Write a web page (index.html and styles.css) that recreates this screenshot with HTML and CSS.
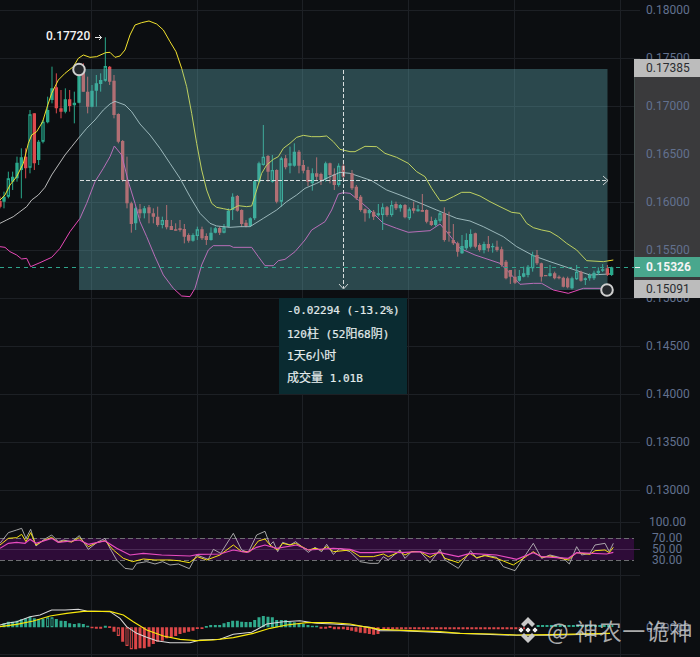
FILE: index.html
```html
<!DOCTYPE html>
<html lang="zh">
<head>
<meta charset="utf-8">
<title>Chart</title>
<link rel="stylesheet" href="styles.css">
</head>
<body>
<main class="stage">
<svg class="plot" width="700" height="657" viewBox="0 0 700 657" aria-hidden="true">
  <path class="grid" d="M0 10.5H640M0 58.5H640M0 106.5H640M0 154.5H640M0 202.5H640M0 250.5H640M0 298.5H640M0 346.5H640M0 394.5H640M0 442.5H640M0 490.5H640M0 522.5H640M0 575.5H640M0 654.5H640M91.5 0V657M197.5 0V657M302.5 0V657M408.5 0V657M514.5 0V657M620.5 0V657"/>
  <rect class="rsi-band" x="0" y="538" width="634" height="22"/>
  <path class="grid-faint" d="M0 549.5H640"/>
  <path class="rsi-dash" d="M0 538.5H634M0 560.5H634"/>

  <g transform="scale(.33333)">
    <path class="wick-g" d="M12 575V625M25 515V595M38 515V570M51 470V545M64 445V595M90 330V520M116 420V495M129 360V430M143 290V370M156 200V310M196 265V340M223 275V370M237 190V310M276 255V322M289 225V320M302 220V275M316 112V245M407 620V690M433 618V655M487 650V685M579 700V725M592 680V720M633 682V722M646 680V700M672 672V700M685 625V682M698 580V660M751 652V680M764 540V660M777 485V550M790 375V497M817 465V548M844 470V620M870 440V520M883 430V500M937 505V572M977 485V545M1016 490V560"/>
    <path class="body-g" d="M12 590V605M25 535V590M38 530V545M51 488V535M64 472V510M90 343V503M116 425V480M129 365V425M143 330V367M156 265V300M196 298V335M223 308V316M237 205V308M276 272V320M289 250V272M302 240V252M316 198V242M407 625V670M433 625V640M487 660V675M579 705V722M592 688V708M633 698V720M646 685V698M672 682V698M685 632V680M698 590V630M751 655V678M764 543V655M777 490V545M790 470V495M817 510V545M844 475V605M870 490V497M883 455V497M937 520V550M977 490V538M1016 497V555"/>
    <path class="wick-r" d="M0 590V625M77 445V535M103 340V510M169 220V340M183 270V355M209 270V335M250 190V275M263 230V340M329 198V255M342 225V355M355 340V430M368 420V545M381 470V625M394 605V698M420 612V655M447 615V670M460 625V670M473 620V680M500 615V688M514 660V690M527 670V692M540 660V695M553 672V730M566 700V728M606 680V720M619 700V735M659 680V705M712 585V635M725 628V680M738 660V682M804 465V545M830 508V610M857 465V508M897 450V520M910 480V520M924 500V558M950 472V540M963 518V555M990 488V550M1003 505V570M1030 480V540"/>
    <path class="body-r" d="M0 603V620M77 470V505M103 340V490M169 262V325M183 325V335M209 298V318M250 215V275M263 275V320M329 200V245M342 242V345M355 342V425M368 423V540M381 540V610M394 610V672M420 628V640M447 622V640M460 640V650M473 650V675M500 660V682M514 678V690M527 688V692M540 685V690M553 687V710M566 705V722M606 688V715M619 708V720M659 684V698M712 588V632M725 630V672M738 668V678M804 468V515M830 510V605M857 475V502M897 455V497M910 495V512M924 510V545M950 520V530M963 522V540M990 490V525M1003 523V555M1030 497V530"/>
    <path class="hollow" d="M90 347V499M129 370V420M316 203V237M487 664V671M672 686V694M790 474V491M817 514V541M844 480V600M1016 502V550M593 692V704M25 540V585"/>

    <polyline class="ln-y" points="0,600 15,585 30,555 50,530 70,490 85,430 95,405 110,395 128,365 140,325 155,280 175,240 195,220 220,200 235,175 250,165 270,172 290,170 317,158 330,157 345,172 360,168 375,150 390,105 405,75 425,68 447,63 470,72 490,90 510,125 528,155 545,205 560,260 575,340 590,430 605,510 620,570 635,610 650,622 670,626 690,630 700,625 715,617 740,620 755,618 770,570 785,520 800,495 820,478 835,470 850,445 870,430 890,412 910,406 935,410 960,410 980,408 1000,425 1020,448 1050,455 1065,455 1095,439 1130,440 1155,460 1190,472 1225,490 1250,515 1275,530 1295,565 1320,602 1335,602 1360,590 1385,577 1410,577 1440,588 1470,605 1500,620 1535,637 1560,640 1580,670 1600,683 1625,690 1650,695 1675,710 1700,730 1730,750 1760,782 1810,785 1840,780"/>
    <polyline class="ln-w" points="0,670 20,660 40,650 60,635 80,620 95,600 115,585 135,562 155,525 175,495 195,465 215,440 235,415 260,385 285,360 310,330 330,312 345,304 375,315 395,335 420,372 450,405 480,445 510,490 540,535 570,590 600,640 630,670 650,678 690,682 720,680 750,680 790,655 830,630 860,605 890,585 915,565 950,550 990,530 1020,517 1050,520 1080,530 1115,542 1160,570 1200,585 1250,605 1310,630 1370,655 1410,663 1450,680 1510,710 1550,740 1600,767 1650,785 1710,805 1770,825 1830,822"/>
    <polyline class="ln-m" points="0,740 15,742 30,755 50,765 65,777 80,775 92,800 120,788 155,772 180,745 210,695 240,655 260,610 285,545 310,505 330,470 343,438 365,465 385,545 405,610 420,665 440,710 465,770 490,825 520,865 545,888 570,890 585,865 605,795 625,750 640,737 690,737 700,742 755,742 775,770 795,797 820,797 835,782 855,778 885,755 915,720 935,690 975,665 995,630 1015,582 1030,578 1050,580 1075,600 1110,630 1150,670 1190,685 1225,697 1290,692 1320,672 1340,695 1380,745 1425,765 1470,780 1500,790 1530,820 1560,853 1600,850 1625,850 1660,870 1705,880 1750,865 1820,865"/>
  </g>
  <g transform="translate(350 0) scale(.33333)">
    <path class="wick-r" d="M6 510V570M19 555V600M32 585V635M45 625V665M71 630V660M111 618V650M138 605V630M165 612V655M191 605V640M217 582V635M230 628V670M244 650V678M283 622V725M297 635V725M310 672V735M323 725V770M376 698V745M389 730V755M415 708V755M441 722V755M455 740V800M468 780V838M481 810V852M495 808V852M561 750V795M574 788V845M614 815V838M627 826V838M640 830V862M653 830V865M693 812V845M772 795V828"/>
    <path class="body-r" d="M6 520V565M19 560V595M32 590V630M45 628V640M71 635V650M111 622V645M138 612V625M165 615V652M191 625V632M217 630V635M230 630V665M244 663V675M283 640V720M297 695V700M310 720V730M323 730V755M376 700V740M389 735V750M415 732V745M441 740V750M455 748V795M468 785V835M481 810V830M495 830V848M561 765V790M574 790V830M587 825V829M614 820V835M627 830V835M640 833V860M653 835V862M693 815V842M772 805V825"/>
    <path class="wick-g" d="M58 628V655M85 612V650M98 610V690M125 602V650M151 612V635M178 622V660M204 615V635M257 655V680M270 635V668M336 705V762M349 700V750M362 688V745M402 725V760M428 730V758M508 810V845M521 800V832M534 795V832M548 755V815M600 795V830M666 830V868M680 795V840M706 832V855M719 820V842M732 812V840M745 802V825M758 792V816M785 800V828"/>
    <path class="body-g" d="M58 630V640M85 640V646M98 622V645M125 615V645M151 615V625M178 628V655M204 628V634M257 660V675M270 640V662M336 738V760M349 720V745M362 702V740M402 732V750M428 738V742M508 828V842M521 820V830M534 800V825M548 765V805M600 820V828M666 835V865M680 815V838M706 835V840M719 825V835M732 818V835M745 812V820M758 808V812M785 802V825"/>
    <path class="hollow" d="M98 626V641M125 619V641M178 632V651M548 769V801M680 819V834M270 644V658"/>
  </g>

  <rect class="range" x="79" y="69" width="528.500" height="221"/>
  <path class="price-dash" d="M0 267.500H634"/>
  <path class="cross" d="M80 180.500H606M343.500 70V288"/>
  <path class="chev" d="M339 284L343.500 289L348 284M603 176L608 180.500L603 185"/>
  <circle class="handle" cx="79" cy="69.500" r="5.800"/>
  <circle class="handle" cx="607" cy="290" r="5.800"/>
  <path class="pin" d="M95 37.500H101.500M99 35L101.500 37.500L99 40"/>

  <g transform="translate(0 510) scale(.33333)">
    <polyline class="rl-w" points="0,100 25,68 50,60 65,55 78,85 92,58 108,108 130,90 155,75 175,95 190,90 215,95 238,77 265,118 290,98 315,85 330,115 350,150 375,175 398,178 410,160 440,155 465,162 488,155 510,165 535,162 568,176 590,135 625,148 640,118 662,130 700,70 725,120 745,127 770,75 795,64 810,105 820,95 833,125 848,97 870,105 887,95 925,127 945,112 965,125 980,103 1000,133 1020,115 1050,125 1080,155 1110,160 1135,160 1150,140 1165,150 1200,120 1215,145 1235,125 1260,125 1290,158 1320,118 1335,150 1375,175 1412,122 1430,145 1455,135 1490,142 1510,170 1545,182 1600,100 1625,145 1650,135 1690,145 1708,162 1730,110 1745,135 1770,130 1785,105 1815,100 1828,125 1840,100"/>
    <polyline class="rl-y" points="0,105 25,85 50,83 65,73 78,95 92,68 108,105 130,92 155,82 175,97 190,93 215,96 238,83 265,110 290,98 315,92 340,120 370,145 398,155 430,147 465,150 510,150 535,152 568,158 592,140 620,150 660,135 700,105 725,125 750,125 775,93 795,87 810,105 832,120 848,100 870,105 887,100 925,120 945,115 965,120 980,110 1000,125 1050,120 1080,140 1120,140 1150,132 1165,140 1200,125 1215,135 1235,125 1260,125 1290,142 1320,125 1335,145 1375,158 1410,130 1430,143 1455,137 1490,145 1540,165 1600,125 1625,142 1650,138 1705,150 1730,128 1770,133 1785,122 1815,120 1828,128 1840,112"/>
    <polyline class="rl-m" points="0,115 25,100 50,97 75,100 90,88 108,100 155,85 175,97 215,93 238,90 265,103 315,93 350,115 390,135 430,130 485,135 570,138 595,133 660,132 700,120 740,127 770,112 795,105 830,115 890,105 925,120 1000,115 1050,118 1080,128 1120,128 1170,125 1200,128 1260,125 1290,132 1320,128 1375,140 1410,130 1490,135 1550,148 1600,128 1625,140 1705,145 1730,128 1820,132 1840,127"/>

    <path class="bar-g" d="M12 340V352M25 335V352M38 335V352M51 332V352M64 328V352M77 325V352M90 320V352M103 325V352M116 328V352M129 326V352M143 322V352M156 322V352M169 327V352M183 332V352M196 333V352M209 340V352M223 342V352M237 340V352M250 342V352M263 347V352M316 347V353M619 348V353M632 345V352M646 345V352M659 345V352M672 340V352M685 336V352M698 332V352M712 332V352M725 335V352M738 336V352M751 336V352M764 330V352M777 322V352M790 318V352M804 320V352M817 322V352M830 330V352M844 330V352M857 330V352M870 335V352M883 337V352M897 340V352M910 342V352M924 345V352M937 347V352M950 347V352"/>
    <path class="bar-r" d="M276 350V355M289 350V356M302 350V356M329 349V354M342 350V365M355 352V378M368 352V395M381 352V408M394 352V418M407 352V418M420 352V415M433 352V415M447 352V410M460 352V402M473 352V395M487 352V392M500 352V385M514 352V382M527 352V378M540 352V372M553 352V368M566 352V365M579 352V362M592 352V357M606 352V357M963 350V356M977 350V356M990 348V354M1003 350V358M1016 350V358M1030 350V358M1043 350V360M1055 352V362M1068 352V365M1081 352V368M1095 352V370M1108 352V372M1121 352V374M1134 352V372"/>
    <path class="dots-r" d="M1147 355H1575"/>
    <path class="dots-g" d="M1610 348H1840"/>
    <path class="bar-hollow" d="M355 356V374M381 356V404M394 356V414M143 326V348M156 326V348"/>
    <polyline class="ml-w" points="0,345 20,340 50,335 90,320 120,315 155,300 195,300 235,298 260,303 330,305 360,325 380,350 410,370 440,382 470,392 510,398 570,398 600,390 660,388 700,373 755,367 800,342 850,335 900,332 950,340 1000,342 1050,345 1110,352 1140,362 1200,362 1270,365 1370,370 1450,373 1550,376 1650,376 1800,372"/>
    <polyline class="ml-y" points="0,350 50,343 100,333 150,318 200,310 250,304 330,304 370,315 400,335 440,360 490,378 540,388 590,392 640,390 700,383 760,370 810,355 860,345 920,338 990,338 1050,342 1090,350 1140,358 1230,362 1320,365 1380,370 1480,372 1550,375 1650,374 1830,370"/>
  </g>
  <g transform="translate(515 617)">
    <path class="mark" d="M13 0L20 7L17 10L13 6L9 10L6 7ZM13 26L20 19L17 16L13 20L9 16L6 19Z"/>
    <path class="mark-core" d="M3 13L6 10L9 13L6 16ZM23 13L20 10L17 13L20 16ZM13 10L16 13L13 16L10 13Z"/>
  </g>
</svg>

<div class="axis">
  <span class="tick">0.18000</span><span class="tick">0.17500</span><span class="tick">0.17000</span><span class="tick">0.16500</span><span class="tick">0.16000</span><span class="tick">0.15500</span><span class="tick">0.15000</span><span class="tick">0.14500</span><span class="tick">0.14000</span><span class="tick">0.13500</span><span class="tick">0.13000</span>
</div>
<div class="axis-band"></div>
<div class="flag flag-top">0.17385</div>
<div class="flag flag-live">0.15326</div>
<div class="flag flag-low">0.15091</div>
<div class="rsi-axis"><span class="r100">100.00</span><span class="r70">70.00</span><span class="r50">50.00</span><span class="r30">30.00</span><span class="r0">0.00000</span></div>
<div class="peak">0.17720</div>
<aside class="info">
  <p>-0.02294 (-13.2%)</p>
  <p>120<span class="cn">柱</span> (52<span class="cn">阳</span>68<span class="cn">阴</span>)</p>
  <p>1<span class="cn">天</span>6<span class="cn">小时</span></p>
  <p><span class="cn">成交量</span> 1.01B</p>
</aside>
<div class="watermark">@ 神农一诡神</div>
</main>
</body>
</html>
```
FILE: styles.css
```css
* { box-sizing: border-box; }
html, body { margin: 0; padding: 0; background: #0c0e11; }
.stage { position: relative; width: 700px; height: 657px; overflow: hidden; background: #0c0e11; font-family: Roboto, "Noto Sans CJK SC", sans-serif; }
.plot { display: block; position: absolute; left: 0; top: 0; z-index: 2; }
polyline, path { fill: none; }
.grid { stroke: #1d2025; stroke-width: 1; }
.grid-faint { stroke: #4a2a55; stroke-width: 1; }
.rsi-band { fill: #2e0c38; }
.rsi-dash { stroke: #6e6e72; stroke-width: 1; stroke-dasharray: 5 3; }
.wick-g { stroke: #2aa98c; stroke-width: 3; }
.wick-r { stroke: #dd4a4e; stroke-width: 3; }
.body-g { stroke: #2aa98c; stroke-width: 10; }
.body-r { stroke: #dd4a4e; stroke-width: 10; }
.hollow { stroke: #10453d; stroke-width: 4; }
.ln-y { stroke: #f2e22e; stroke-width: 3; }
.ln-w { stroke: #d4d4d4; stroke-width: 2.6; }
.ln-m { stroke: #e848b8; stroke-width: 3; }
.range { fill: rgba(100, 178, 186, .36); }
.price-dash { stroke: #2fa48c; stroke-width: 1; stroke-dasharray: 4 4; }
.cross { stroke: #d8dede; stroke-width: 1; stroke-dasharray: 4 2; }
.chev { stroke: #d8dede; stroke-width: .9; }
.handle { fill: #24282c; stroke: #cfcfcf; stroke-width: 2; }
.pin { stroke: #e8e8e8; stroke-width: 1; }
.rl-w { stroke: #bdbdbd; stroke-width: 2.6; }
.rl-y { stroke: #f5e313; stroke-width: 3; }
.rl-m { stroke: #e84cc0; stroke-width: 3.6; }
.bar-g { stroke: #2fa98c; stroke-width: 9; }
.bar-r { stroke: #dc4648; stroke-width: 9; }
.bar-hollow { stroke: #0f1a1c; stroke-width: 3.5; }
.dots-r { stroke: #dc4648; stroke-width: 6; stroke-dasharray: 9 4.2; }
.dots-g { stroke: #2fa98c; stroke-width: 6; stroke-dasharray: 9 4.2; }
.ml-w { stroke: #d8d8d8; stroke-width: 3.2; }
.ml-y { stroke: #f8e80c; stroke-width: 3.4; }
.mark { fill: #c9c9c9; }
.mark-core { fill: #ececec; stroke: #0c0e11; stroke-width: .6; }
.axis { position: absolute; left: 646px; top: -14px; z-index: 4; display: grid; grid-auto-rows: 48px; align-items: center; }
.tick, .rsi-axis { font-size: 12px; line-height: 16px; color: #62718f; }
.axis-band { position: absolute; left: 634px; top: 60px; width: 66px; height: 238px; background: #3a3a3c; border-left: 1px solid #45504f; z-index: 3; }
.flag { position: absolute; left: 634px; width: 66px; padding-left: 12px; font-size: 12px; line-height: 18px; height: 18px; z-index: 5; background: #bcbcbc; color: #2a2c30; }
.flag-top { top: 59px; }
.flag-live { top: 257px; height: 20px; line-height: 20px; background: #49a78d; color: #f4f4f4; font-weight: 700; }
.flag-live::before { content: ""; position: absolute; left: 1px; top: 10px; width: 5px; height: 1px; background: #f0f0f0; }
.flag-low { top: 280px; }
.rsi-axis { position: absolute; left: 649px; top: 514px; z-index: 4; width: 40px; height: 124px; }
.rsi-axis span { position: absolute; left: 0; }
.r100 { top: 0; }
.r70 { top: 16px; padding-left: 3px; }
.r50 { top: 27px; padding-left: 3px; }
.r30 { top: 38px; padding-left: 3px; }
.r0 { top: 106px; left: -3px !important; }
.peak { position: absolute; left: 46px; top: 29px; z-index: 5; font-size: 12px; line-height: 14px; font-weight: 500; color: #f4f4f4; }
.info { position: absolute; left: 279px; top: 298px; width: 128px; height: 96px; padding: 2px 0 0 8px; background: #0a2b31; color: #e4ecec; z-index: 5; font-family: "DejaVu Sans Mono", "Noto Sans CJK SC", monospace; font-size: 11px; line-height: 22px; -webkit-text-stroke: .2px #e4ecec; }
.info p { margin: 0; white-space: nowrap; height: 22px; }
.cn { font-size: 12px; font-family: "Noto Sans CJK SC", sans-serif; }
.watermark { position: absolute; left: 547px; top: 616px; z-index: 6; font-size: 23px; line-height: 28px; letter-spacing: .6px; color: rgba(215, 215, 215, .78); white-space: nowrap; font-family: "Noto Sans CJK SC", sans-serif; }
```
